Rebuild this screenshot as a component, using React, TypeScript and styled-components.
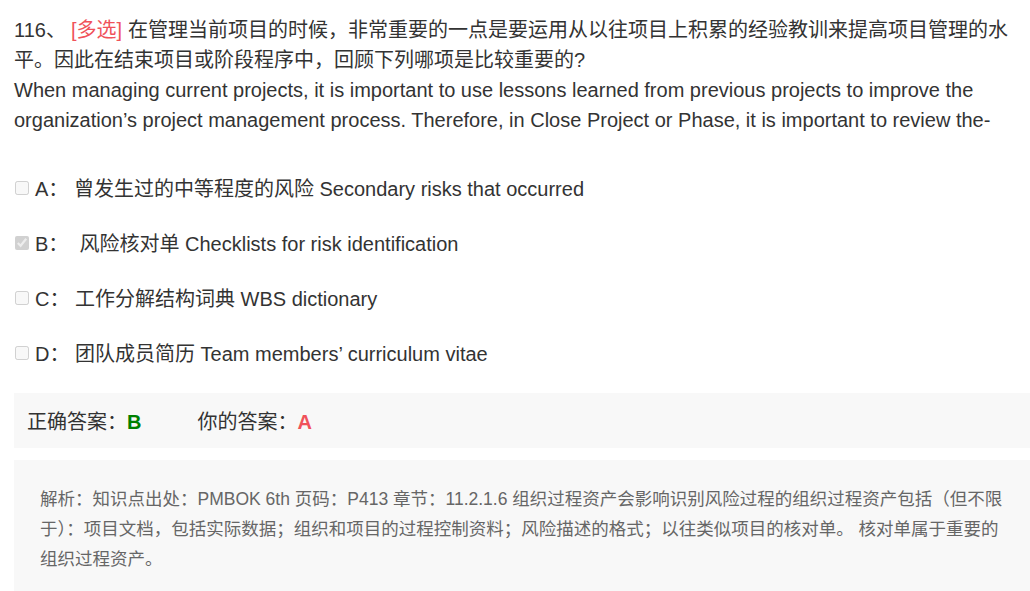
import React from 'react';
import styled, { createGlobalStyle } from 'styled-components';

const GlobalStyle = createGlobalStyle`
  html, body {
    margin: 0;
    padding: 0;
    background: #fff;
    overflow: hidden;
  }
  body {
    font-family: "Liberation Sans", Arial, "Noto Sans CJK SC", sans-serif;
    color: #333;
  }
`;

const Page = styled.div`
  width: 1016px;
  padding: 15px 0 0 14px;
`;

const Question = styled.div`
  font-size: 20px;
  line-height: 30px;
  color: #333;
`;

const Num = styled.span`
  margin-right: 5px;
`;

const Tag = styled.span`
  color: #f0525a;
  margin-right: 6px;
`;

const Options = styled.ul`
  list-style: none;
  margin: 25px 0 0;
  padding: 0;
`;

const Option = styled.li`
  display: flex;
  align-items: center;
  height: 55px;
  font-size: 20px;
  color: #333;
`;

const Check = styled.input`
  width: 14px;
  height: 14px;
  margin: 0 6px 0 1px;
`;

const AnswerBar = styled.div`
  display: flex;
  align-items: center;
  height: 55px;
  margin-top: 13px;
  padding-left: 13px;
  background: #f8f8f8;
  font-size: 20px;
  color: #333;
`;

const AnswerItem = styled.span<{ $gap?: number }>`
  margin-left: ${(p) => p.$gap || 0}px;
`;

const Letter = styled.b<{ $tone: string }>`
  color: ${(p) => p.$tone};
`;

const Analysis = styled.div`
  margin-top: 12px;
  padding: 24px 26px 17px;
  background: #f8f8f8;
  font-size: 17.5px;
  line-height: 30px;
  color: #666;
`;

const options = [
  { key: 'A', text: '曾发生过的中等程度的风险 Secondary risks that occurred', checked: false },
  { key: 'B', text: '\u00a0风险核对单 Checklists for risk identification', checked: true },
  { key: 'C', text: '工作分解结构词典 WBS dictionary', checked: false },
  { key: 'D', text: '团队成员简历 Team members’ curriculum vitae', checked: false },
];

export default function App() {
  return (
    <Page>
      <GlobalStyle />
      <Question>
        <Num>116、</Num>
        <Tag>[多选]</Tag>在管理当前项目的时候，非常重要的一点是要运用从以往项目上积累的经验教训来提高项目管理的水平。因此在结束项目或阶段程序中，回顾下列哪项是比较重要的?
        <br />
        When managing current projects, it is important to use lessons learned from previous projects to improve the organization’s project management process. Therefore, in Close Project or Phase, it is important to review the-
      </Question>
      <Options>
        {options.map((o) => (
          <Option key={o.key}>
            <Check type="checkbox" disabled defaultChecked={o.checked} />
            {o.key}： {o.text}
          </Option>
        ))}
      </Options>
      <AnswerBar>
        <AnswerItem>
          正确答案：<Letter $tone="#008000">B</Letter>
        </AnswerItem>
        <AnswerItem $gap={56}>
          你的答案：<Letter $tone="#f0525a">A</Letter>
        </AnswerItem>
      </AnswerBar>
      <Analysis>
        解析：知识点出处：PMBOK 6th 页码：P413 章节：11.2.1.6 组织过程资产会影响识别风险过程的组织过程资产包括（但不限于）：项目文档，包括实际数据；组织和项目的过程控制资料；风险描述的格式；以往类似项目的核对单。 核对单属于重要的组织过程资产。
      </Analysis>
    </Page>
  );
}
